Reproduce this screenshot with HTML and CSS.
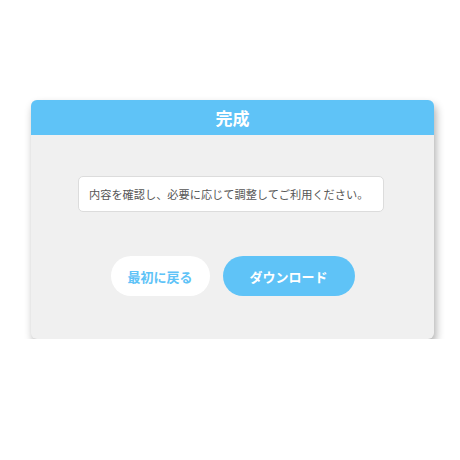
FILE: index.html
```html
<!DOCTYPE html>
<html lang="ja">
<head>
<meta charset="utf-8">
<link rel="stylesheet" href="styles.css">
</head>
<body>
<div class="card">
  <div class="card-header">完成</div>
  <div class="card-body">
    <div class="message">内容を確認し、必要に応じて調整してご利用ください。</div>
    <div class="actions">
      <button class="btn btn-back">最初に戻る</button>
      <button class="btn btn-download">ダウンロード</button>
    </div>
  </div>
</div>
</body>
</html>
```
FILE: styles.css
```css
html, body {
  margin: 0;
  padding: 0;
  background: #ffffff;
  font-family: "Noto Sans CJK JP", "Noto Sans", sans-serif;
}
.card {
  margin: 100px 0 0 31px;
  width: 403px;
  background: #f0f0f0;
  border-radius: 6px;
  box-shadow: 2px 5px 9px rgba(0, 0, 0, 0.32);
  overflow: hidden;
}
.card-header {
  height: 35px;
  background: #5fc3f7;
  color: #ffffff;
  font-weight: 700;
  font-size: 17px;
  display: flex;
  align-items: center;
  justify-content: center;
}
.card-body {
  padding: 41px 0 43px;
  display: flex;
  flex-direction: column;
  align-items: center;
}
.message {
  box-sizing: border-box;
  width: 306px;
  height: 36px;
  margin-left: -3px;
  padding: 0 10px;
  background: #ffffff;
  border: 1px solid #dcdcdc;
  border-radius: 5px;
  color: #555555;
  font-size: 11.2px;
  display: flex;
  align-items: center;
  white-space: nowrap;
}
.actions {
  margin-top: 44px;
  display: flex;
  gap: 13px;
}
.btn {
  height: 40px;
  border: none;
  border-radius: 20px;
  font-family: inherit;
  font-size: 13px;
  font-weight: 700;
  display: flex;
  align-items: center;
  justify-content: center;
  padding: 0;
}
.btn-back {
  width: 99px;
  background: #ffffff;
  color: #5fc3f7;
}
.btn-download {
  width: 132px;
  background: #5fc3f7;
  color: #ffffff;
}
```
